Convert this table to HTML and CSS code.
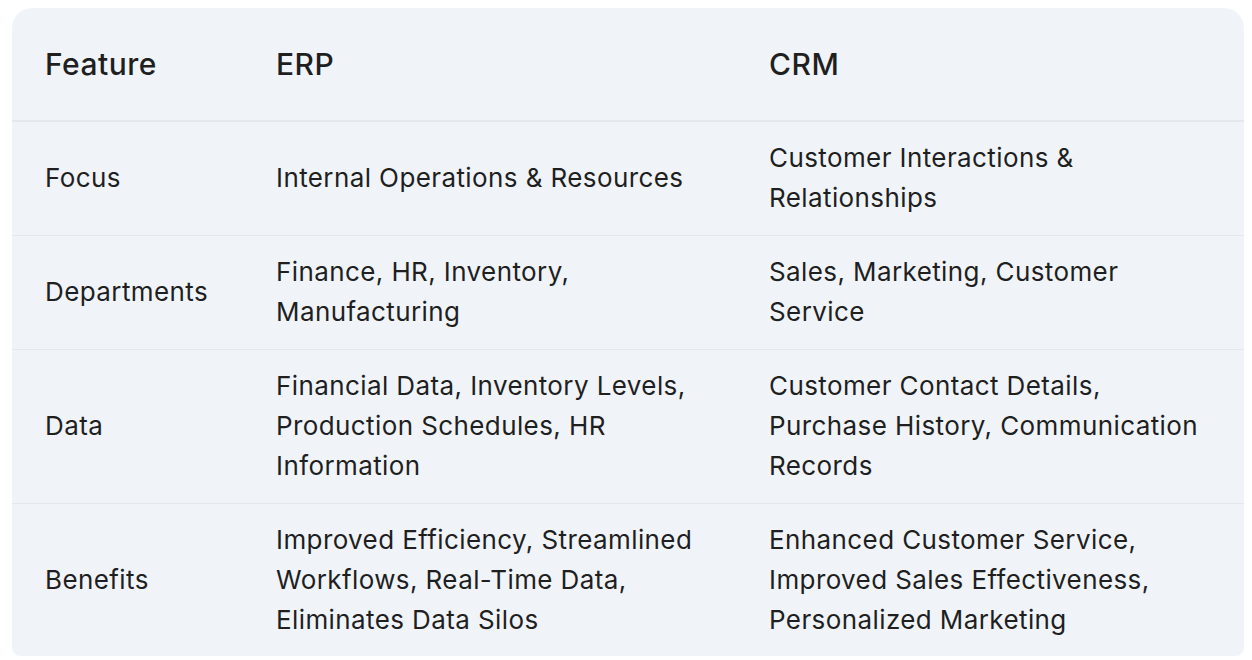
FILE: index.html
```html
<!DOCTYPE html>
<html>
<head>
<meta charset="utf-8">
<link rel="stylesheet" href="styles.css">
</head>
<body>
<div class="table-wrap">
  <table class="cmp">
    <colgroup>
      <col class="c1"><col class="c2"><col class="c3">
    </colgroup>
    <thead>
      <tr><th>Feature</th><th>ERP</th><th>CRM</th></tr>
    </thead>
    <tbody>
      <tr><td>Focus</td><td>Internal Operations &amp; Resources</td><td>Customer Interactions &amp; Relationships</td></tr>
      <tr><td>Departments</td><td>Finance, HR, Inventory, Manufacturing</td><td>Sales, Marketing, Customer Service</td></tr>
      <tr><td>Data</td><td>Financial Data, Inventory Levels, Production Schedules, HR Information</td><td>Customer Contact Details, Purchase History, Communication Records</td></tr>
      <tr><td>Benefits</td><td>Improved Efficiency, Streamlined Workflows, Real-Time Data, Eliminates Data Silos</td><td>Enhanced Customer Service, Improved Sales Effectiveness, Personalized Marketing</td></tr>
    </tbody>
  </table>
</div>
</body>
</html>
```

FILE: styles.css
```css
html, body {
  margin: 0;
  padding: 0;
  background: #ffffff;
}
body {
  padding: 8px 8px 0 12px;
  font-family: Inter, Roboto, "Noto Sans", Arial, sans-serif;
  color: #1f1f1f;
}
.table-wrap {
  width: 1232px;
  background: #f0f4f9;
  border-radius: 20px 20px 8px 8px;
  overflow: hidden;
}
.cmp {
  width: 100%;
  border-collapse: collapse;
  table-layout: fixed;
}
.c1 { width: 231px; }
.c2 { width: 493px; }
.c3 { width: 508px; }
.cmp th {
  text-align: left;
  font-weight: 500;
  font-size: 30px;
  line-height: 40px;
  letter-spacing: 0.5px;
  padding: 36px 33px 36px 33px;
  border-bottom: 2px solid #e4e8ee;
}
.cmp td {
  font-size: 26px;
  line-height: 40px;
  letter-spacing: 0.4px;
  padding: 16px 33px 17px 33px;
  vertical-align: middle;
  border-bottom: 1px solid #e4e8ee;
}
.cmp tbody tr:last-child td {
  border-bottom: none;
  padding-bottom: 16px;
}
```
